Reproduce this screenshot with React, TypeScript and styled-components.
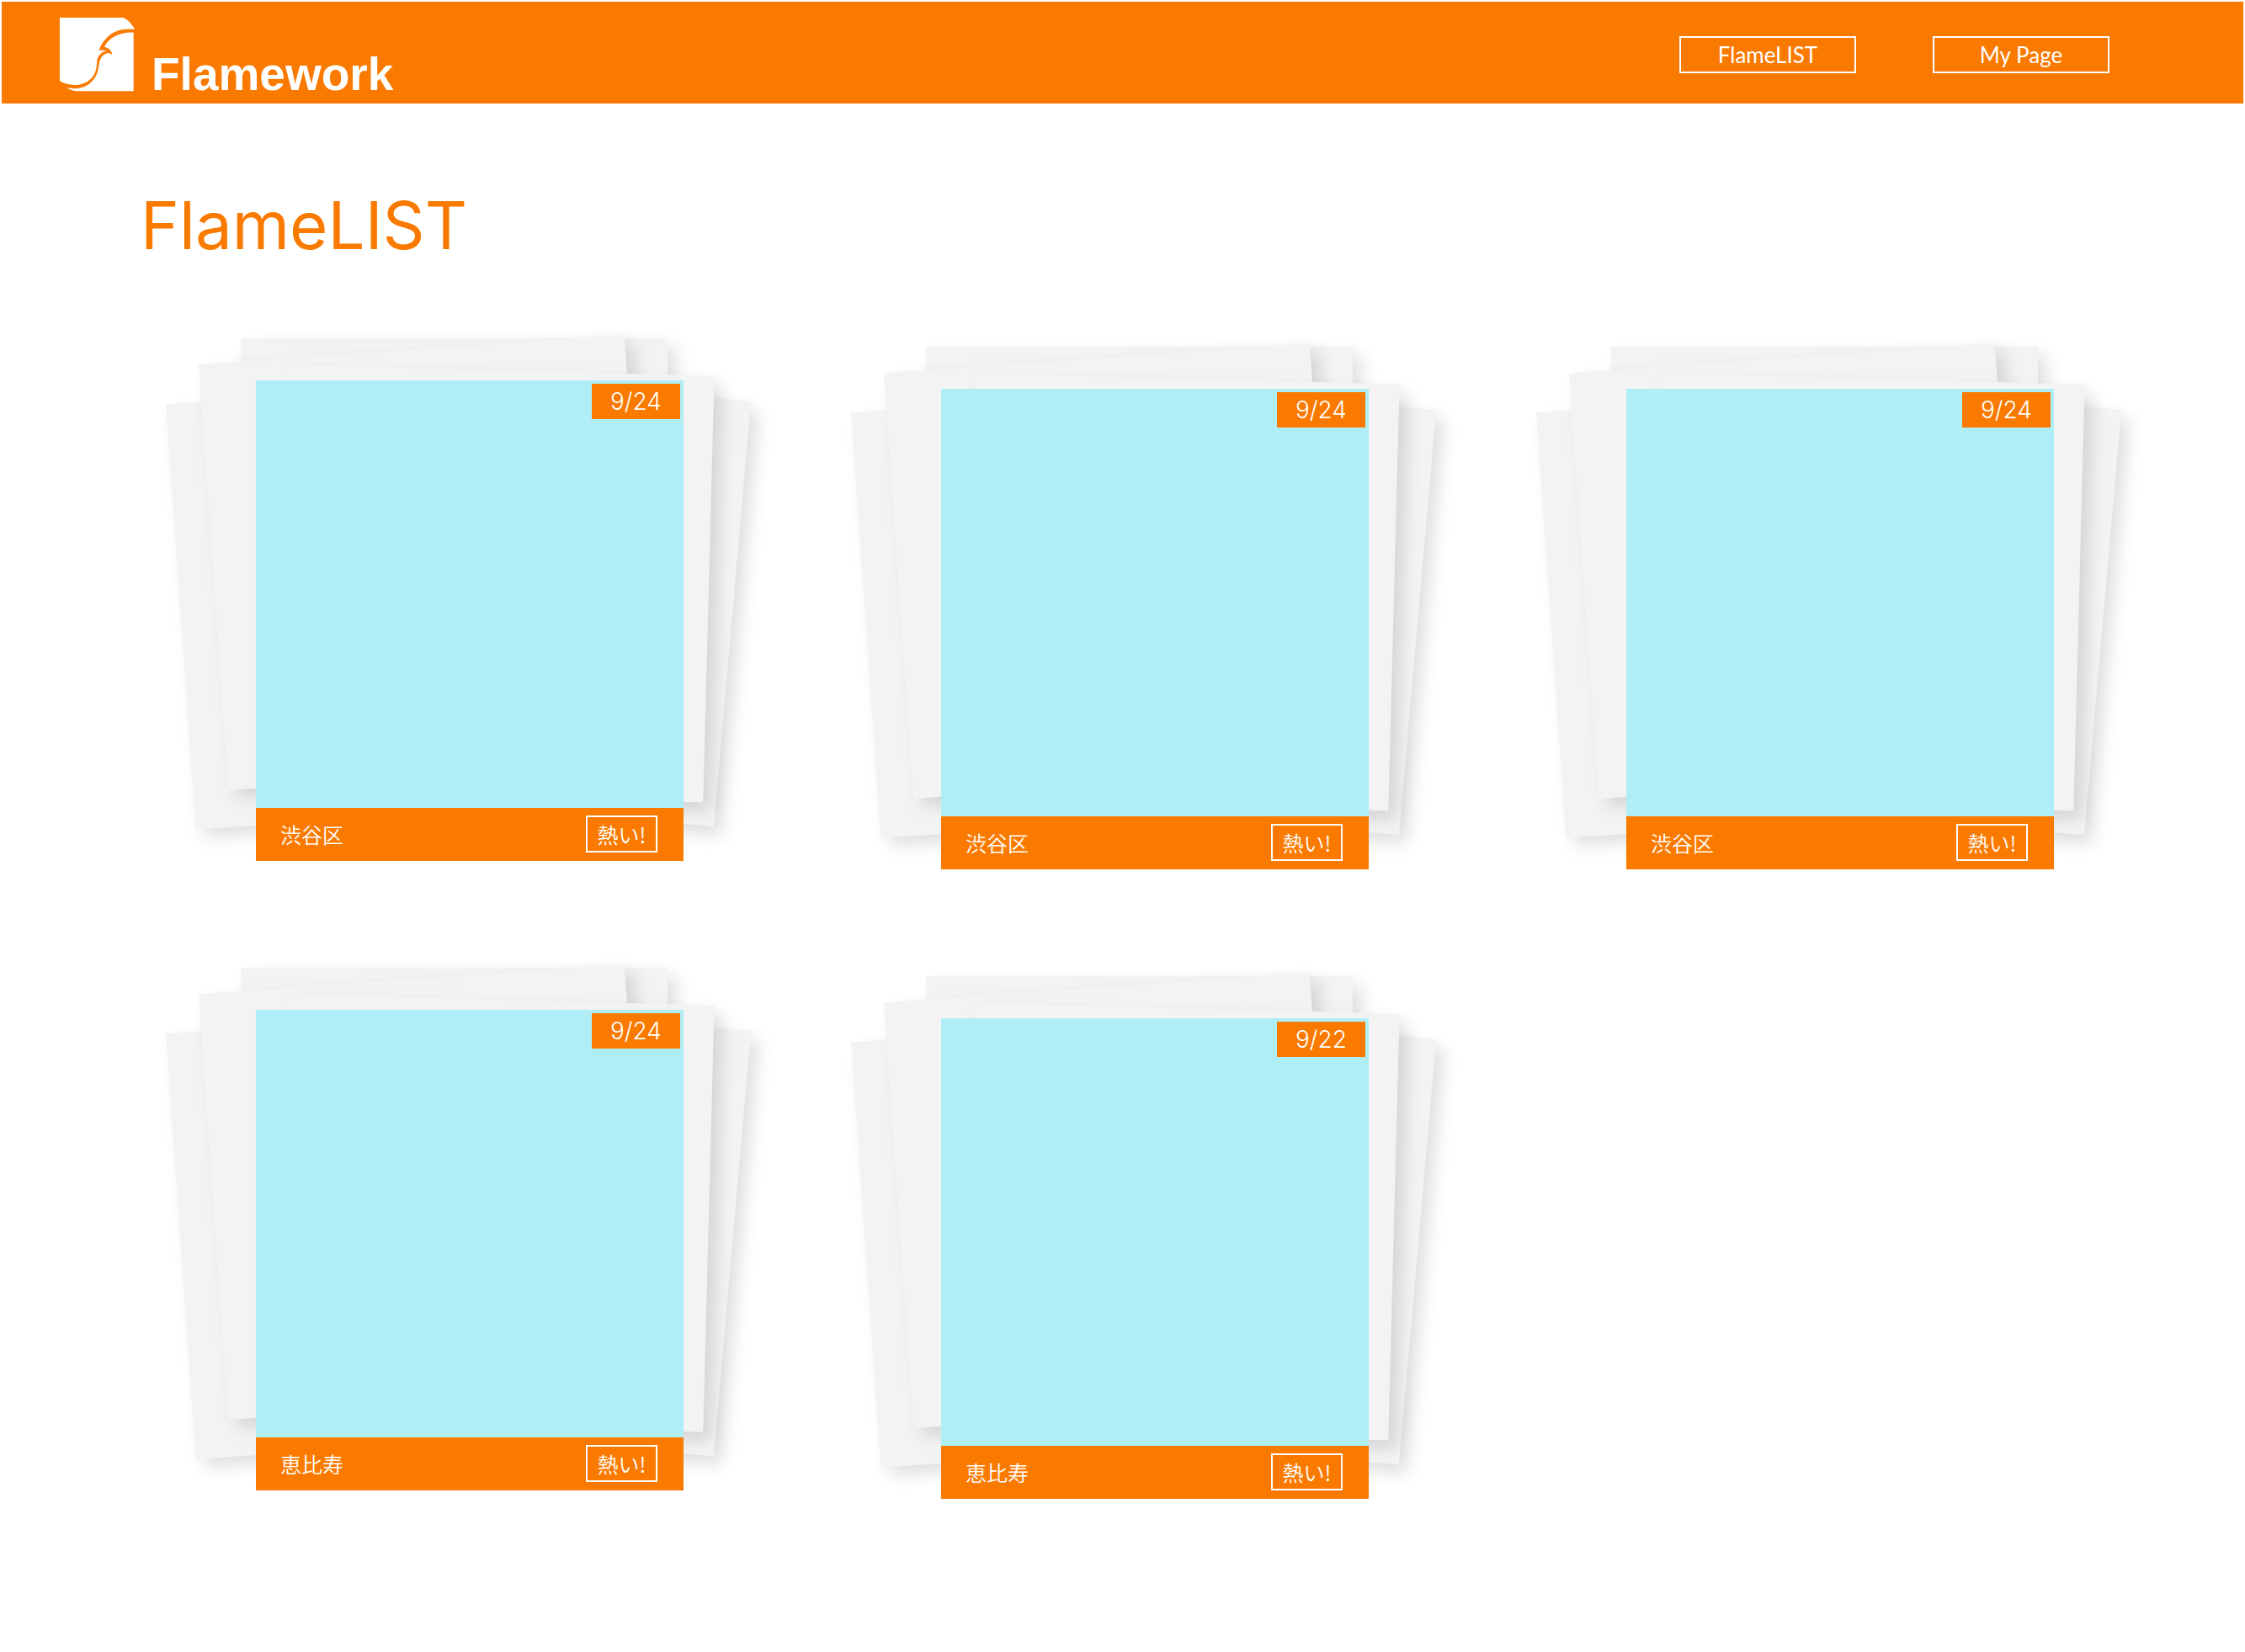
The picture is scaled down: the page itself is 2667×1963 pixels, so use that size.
import React from "react";
import styled, { createGlobalStyle } from "styled-components";

const orange = "#fa7a00";
const japanese = `"Noto Sans CJK JP", sans-serif`;

const GlobalStyle = createGlobalStyle`
  * { box-sizing: border-box; }
  body {
    margin: 0;
    padding: 2px;
    background: #fff;
    font-family: Inter, ${japanese};
  }
`;

const Header = styled.header`
  display: flex;
  align-items: center;
  justify-content: space-between;
  height: 121px;
  padding: 4px 159px 0 69px;
  background: ${orange};
  color: #fff;
`;

const Brand = styled.a`
  display: flex;
  align-items: flex-end;
  gap: 20px;
  color: inherit;
  text-decoration: none;
`;

const LogoMark = styled.svg`
  display: block;
  width: 89px;
  height: 88px;
`;

const BrandName = styled.span`
  font: 700 55px/42px "Liberation Sans", Arial, sans-serif;
`;

const Nav = styled.nav`
  display: flex;
  gap: 91px;
`;

const NavLink = styled.a`
  width: 210px;
  border: 2px solid #fff;
  color: #fff;
  font: 400 26px/40px Lato, sans-serif;
  text-align: center;
  text-decoration: none;
`;

const Main = styled.main`
  padding: 97px 224px 120px 165px;
`;

const Title = styled.h1`
  margin: 0 0 136px;
  color: ${orange};
  font-size: 78px;
  font-weight: 400;
  line-height: 96px;
`;

const Albums = styled.ul`
  display: grid;
  grid-template-columns: repeat(auto-fill, 508px);
  column-gap: 306px;
  row-gap: 167px;
  margin: 0;
  padding: 0 0 0 137px;
  list-style: none;
`;

const Album = styled.li`
  position: relative;
  isolation: isolate;
  margin-top: 10px;

  &:nth-child(3n + 1) {
    margin: 0 0 10px;
  }
`;

const Sheet = styled.div<{ $x: number; $y: number; $turn: number }>`
  position: absolute;
  z-index: -1;
  left: ${(p) => p.$x}px;
  top: ${(p) => p.$y}px;
  width: 507px;
  height: 507px;
  background: #f3f3f3;
  box-shadow: 10px 10px 20px rgba(0, 0, 0, 0.13);
  transform: rotate(${(p) => p.$turn}deg);
`;

const Photo = styled.div`
  display: flex;
  justify-content: flex-end;
  align-items: flex-start;
  height: 508px;
  padding: 4px;
  background: #b0eef7;
`;

const DateBadge = styled.time`
  width: 105px;
  background: ${orange};
  color: #fff;
  font-size: 28px;
  font-weight: 300;
  line-height: 42px;
  text-align: center;
`;

const Caption = styled.div`
  display: flex;
  align-items: center;
  justify-content: space-between;
  height: 63px;
  padding: 0 31px 2px 29px;
  background: ${orange};
  color: #fff;
  font: 350 25px/40px ${japanese};
`;

const HotButton = styled.button`
  width: 85px;
  height: 44px;
  padding: 0;
  border: 2px solid #fff;
  background: none;
  color: inherit;
  font: inherit;
`;

/* Loose sheets behind the photo, listed from back to front. */
const sheets = [
  { x: -18, y: -50, turn: 0 },
  { x: -90, y: 10, turn: -4 },
  { x: 60, y: 2, turn: 5 },
  { x: -51, y: -37, turn: -4 },
  { x: 31, y: -12, turn: 1.5 },
];

const albums = [
  { date: "9/24", place: "渋谷区" },
  { date: "9/24", place: "渋谷区" },
  { date: "9/24", place: "渋谷区" },
  { date: "9/24", place: "恵比寿" },
  { date: "9/22", place: "恵比寿" },
];

export default function App() {
  return (
    <>
      <GlobalStyle />
      <Header>
        <Brand href="#">
          <LogoMark viewBox="64 33 267 264" fill="#fff" aria-hidden="true">
            <path d="M64 33H290C306 39 323 58 331 75C290 70 262 79 240 97C219 115 209 134 204 150C216 149 224 148 231 151C210 156 197 171 196 194C196 230 178 264 130 272C103 275 82 269 64 259Z" />
            <path d="M327 86V295H125C110 293 96 289 89 282C110 287 130 287 150 280C185 265 200 235 203 205C206 180 215 164 233 160C240 159 247 161 252 165C248 149 238 140 222 137C240 105 275 84 327 86Z" />
          </LogoMark>
          <BrandName>Flamework</BrandName>
        </Brand>
        <Nav>
          <NavLink href="#list">FlameLIST</NavLink>
          <NavLink href="#mypage">My Page</NavLink>
        </Nav>
      </Header>
      <Main>
        <Title>FlameLIST</Title>
        <Albums>
          {albums.map((album, i) => (
            <Album key={i}>
              {sheets.map((s, n) => (
                <Sheet key={n} $x={s.x} $y={s.y} $turn={s.turn} />
              ))}
              <Photo>
                <DateBadge>{album.date}</DateBadge>
              </Photo>
              <Caption>
                <span>{album.place}</span>
                <HotButton type="button">熱い!</HotButton>
              </Caption>
            </Album>
          ))}
        </Albums>
      </Main>
    </>
  );
}
